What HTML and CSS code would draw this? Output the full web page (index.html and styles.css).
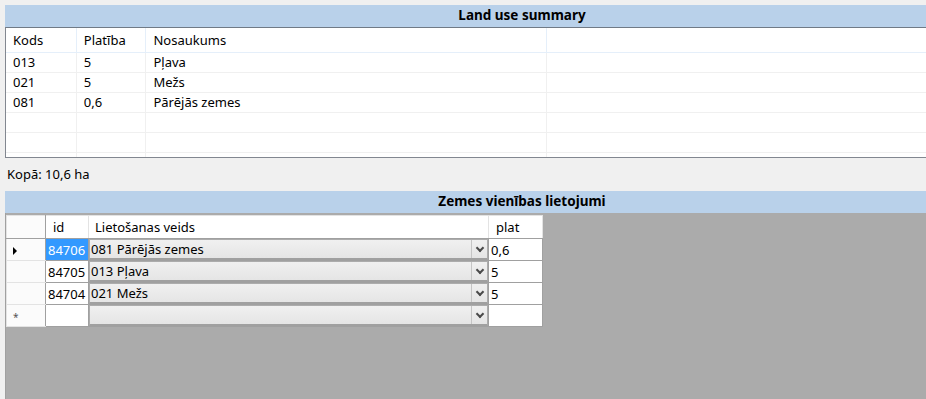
FILE: index.html
```html
<!DOCTYPE html>
<html lang="lv">
<head>
    <meta charset="UTF-8">
    <title>Land use summary</title>
    <link rel="stylesheet" href="styles.css">
</head>
<body>
    <div class="form">
        <div class="caption">Land use summary</div>
        <div class="listview">
            <table class="list">
                <tr class="head">
                    <td class="c1">Kods</td>
                    <td class="c2">Platība</td>
                    <td class="c3">Nosaukums</td>
                    <td class="c4"></td>
                </tr>
                <tr><td>013</td><td>5</td><td>Pļava</td><td></td></tr>
                <tr><td>021</td><td>5</td><td>Mežs</td><td></td></tr>
                <tr><td>081</td><td>0,6</td><td>Pārējās zemes</td><td></td></tr>
                <tr><td></td><td></td><td></td><td></td></tr>
                <tr><td></td><td></td><td></td><td></td></tr>
                <tr class="cut"><td></td><td></td><td></td><td></td></tr>
            </table>
        </div>
        <div class="total">Kopā: 10,6 ha</div>
        <div class="caption">Zemes vienības lietojumi</div>
        <div class="gridview">
            <table class="grid">
                <tr class="head">
                    <td class="rh"></td>
                    <td class="g-id">id</td>
                    <td class="g-kind">Lietošanas veids</td>
                    <td class="g-area">plat</td>
                </tr>
                <tr>
                    <td class="rh"><span class="arrow"></span></td>
                    <td class="num selected">84706</td>
                    <td class="combo"><div class="box"><span>081 Pārējās zemes</span><i></i></div></td>
                    <td class="area">0,6</td>
                </tr>
                <tr>
                    <td class="rh"></td>
                    <td class="num">84705</td>
                    <td class="combo"><div class="box"><span>013 Pļava</span><i></i></div></td>
                    <td class="area">5</td>
                </tr>
                <tr>
                    <td class="rh"></td>
                    <td class="num">84704</td>
                    <td class="combo"><div class="box"><span>021 Mežs</span><i></i></div></td>
                    <td class="area">5</td>
                </tr>
                <tr>
                    <td class="rh"><span class="star">*</span></td>
                    <td class="num"></td>
                    <td class="combo"><div class="box"><span></span><i></i></div></td>
                    <td class="area"></td>
                </tr>
            </table>
        </div>
    </div>
</body>
</html>
```

FILE: styles.css
```css
*{
    margin: 0;
    padding: 0;
    box-sizing: border-box;
}
body{
    background: #f0f0f0;
    font-family: 'Noto Sans', 'Open Sans', sans-serif;
    font-size: 13px;
    color: #000;
    width: 926px;
    height: 399px;
    overflow: hidden;
}
.form{
    width: 1034px;
    margin: 5px 0 0 5px;
    display: flex;
    flex-direction: column;
}
.caption{
    background: #b9d1ea;
    height: 22px;
    line-height: 21px;
    text-align: center;
    font-weight: bold;
    font-size: 13.5px;
}
.listview{
    height: 131px;
    background: #fff;
    border: 1px solid #828790;
    border-top: 1px solid #707a86;
    overflow: hidden;
}
.list{
    border-collapse: collapse;
    table-layout: fixed;
}
.list td{
    height: 20px;
    padding: 0 0 0 7px;
    border-right: 1px solid #f0f0f0;
    border-bottom: 1px solid #f0f0f0;
    white-space: nowrap;
}
.list .head td{
    height: 24px;
    border-right: 1px solid #e5effa;
    border-bottom: 1px solid #e5effa;
}
.list .c1{ width: 71px; }
.list .c2{ width: 70px; }
.list .c3{ width: 407px; }
.list .c4{ width: 500px; border-right: none; }
.total{
    height: 33px;
    line-height: 33px;
    padding-left: 2px;
}
.gridview{
    background: #ababab;
    height: 190px;
    padding-top: 2px;
    border-left: 1px solid #a0a0a0;
}
.grid{
    border-collapse: collapse;
    table-layout: fixed;
    background: #fff;
}
.grid td{
    height: 22px;
    border: 1px solid #a0a0a0;
    white-space: nowrap;
    overflow: hidden;
}
.grid .head td{
    height: 23px;
    border-color: #e3e3e3 #e3e3e3 #a0a0a0 #e3e3e3;
    padding-left: 7px;
    vertical-align: bottom;
    padding-bottom: 2px;
}
.grid .head td.g-kind{ padding-left: 6px; }
.grid .head td.rh{
    border-right: 1px solid #a0a0a0;
}
.grid .rh{
    width: 39px;
    background: #fbfbfb;
    border-color: #e3e3e3 #a0a0a0 #e3e3e3 #e3e3e3;
    padding-left: 6px;
}
.grid .g-id{ width: 43px; }
.grid .g-kind{ width: 400px; }
.grid .g-area{ width: 54px; }
.grid .num{
    padding-left: 2px;
}
.grid .selected{
    background: #3399ff;
    color: #fff;
}
.grid .area{
    padding-left: 2px;
}
.grid .combo{
    padding: 0;
}
.box{
    display: flex;
    height: 21px;
    border: 1px solid #acacac;
    border-bottom: 2px solid #a0a0a0;
    background: linear-gradient(#f0f0f0, #e5e5e5);
}
.box span{
    flex: 1;
    padding-left: 1px;
    line-height: 18px;
}
.box i{
    width: 16px;
    border-left: 1px solid #c5c5c5;
    position: relative;
}
.box i::after{
    content: "";
    position: absolute;
    left: 5px;
    top: 5px;
    width: 4px;
    height: 4px;
    border-right: 2px solid #4a4a4a;
    border-bottom: 2px solid #4a4a4a;
    transform: rotate(45deg);
}
.arrow{
    display: inline-block;
    width: 0;
    height: 0;
    border-top: 4px solid transparent;
    border-bottom: 4px solid transparent;
    border-left: 4px solid #000;
}
.star{
    font-size: 10px;
    color: #555;
}
```
